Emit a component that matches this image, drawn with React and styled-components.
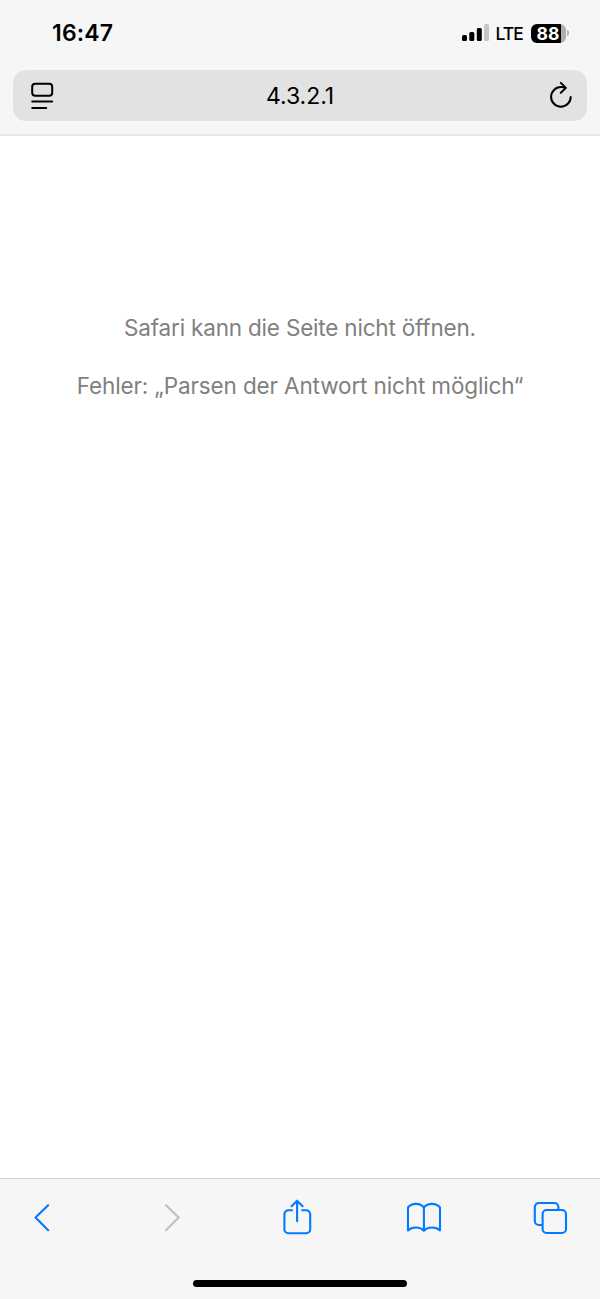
import React from "react";
import styled, { createGlobalStyle } from "styled-components";

const GlobalStyle = createGlobalStyle`
  *, *::before, *::after { box-sizing: border-box; }
  body { margin: 0; background: #fff; font-family: Inter, "Liberation Sans", sans-serif; }
`;

const Screen = styled.div`
  display: flex;
  flex-direction: column;
  width: 600px;
  height: 1299px;
  background: #fff;
  overflow: hidden;
`;

const Header = styled.header`
  height: 136px;
  flex: none;
  background: #f6f6f6;
  border-bottom: 2px solid #e8e8e8;
`;

const StatusBar = styled.div`
  display: flex;
  align-items: center;
  justify-content: space-between;
  height: 70px;
  padding: 0 31px 4px 52px;
  color: #000;
`;

const Time = styled.span`
  font-size: 23px;
  font-weight: 600;
  line-height: 28px;
  letter-spacing: 0.15px;
`;

const Indicators = styled.div`
  display: flex;
  align-items: center;
`;

const Network = styled.span`
  margin: 1px 8px 0 6px;
  font-size: 17.5px;
  font-weight: 500;
  line-height: 20px;
  letter-spacing: -0.9px;
`;

const Battery = styled.div`
  display: flex;
  align-items: center;
  justify-content: center;
  width: 35px;
  height: 19px;
  padding-right: 1px;
  border-radius: 6px;
  background: linear-gradient(to right, #000 0 30.5px, #afafaf 30.5px);
  color: #fff;
  font-size: 17.5px;
  font-weight: 700;
  line-height: 19px;
`;

const BatteryTip = styled.span`
  width: 2px;
  height: 6px;
  margin-left: 1px;
  border-radius: 0 2px 2px 0;
  background: #b5b5b5;
`;

const AddressBar = styled.div`
  display: flex;
  align-items: center;
  justify-content: space-between;
  height: 51px;
  margin: 0 13px;
  padding: 0 13px 0 15px;
  border-radius: 13px;
  background: #e2e2e2;
`;

const Address = styled.span`
  padding-right: 4px;
  font-size: 23px;
  line-height: 28px;
  letter-spacing: -0.05px;
  color: #000;
`;

const Page = styled.main`
  flex: 1;
  padding-top: 178px;
  text-align: center;
`;

const Message = styled.p`
  margin: 0 0 30px;
  font-size: 22.5px;
  line-height: 28px;
  letter-spacing: ${({ $tracking }) => $tracking}px;
  white-space: nowrap;
  color: #808080;
`;

const Footer = styled.footer`
  display: flex;
  flex-direction: column;
  align-items: center;
  justify-content: space-between;
  height: 121px;
  flex: none;
  padding: 17px 0 12px;
  border-top: 1px solid #d2d2d2;
  background: #f6f6f6;
`;

const Toolbar = styled.nav`
  display: flex;
  justify-content: space-between;
  width: 100%;
  padding: 0 28px 0 20px;
`;

const IconButton = styled.button`
  display: flex;
  padding: 0;
  border: 0;
  background: none;
  color: ${({ $muted }) => ($muted ? "#bfbfbf" : "#007aff")};
`;

const Icon = styled.svg`
  display: block;
  flex: none;
  fill: none;
  stroke: currentColor;
  stroke-width: ${({ $weight = 2 }) => $weight};
  stroke-linecap: round;
  stroke-linejoin: round;
`;

const HomeIndicator = styled.div`
  width: 214px;
  height: 7px;
  border-radius: 4px;
  background: #000;
`;

const SignalIcon = () => (
  <svg width="27" height="18" viewBox="0 0 27 18">
    <rect x="0" y="11" width="5" height="6" rx="1.5" />
    <rect x="7.3" y="8" width="5" height="9" rx="1.5" />
    <rect x="14.8" y="4" width="5" height="13" rx="1.5" />
    <rect x="22" y="0" width="5" height="17" rx="1.5" fill="#c6c6c6" />
  </svg>
);

const tools = [
  { label: "Zurück", drawing: <path d="M28.2 9.3 15.5 21.6l12.7 12.6" /> },
  { label: "Vorwärts", muted: true, drawing: <path d="M19 9.3 31.7 21.6 19 34.2" /> },
  {
    label: "Teilen",
    drawing: (
      <>
        <path d="M18.8 14.3h-4.4a4 4 0 0 0-4 4v15a4 4 0 0 0 4 4h17.8a4 4 0 0 0 4-4v-15a4 4 0 0 0-4-4h-4.8" strokeLinecap="butt" />
        <path d="M23.1 25.3V4.7M17.6 10.2l5.5-5.5 5.5 5.5" />
      </>
    ),
  },
  {
    label: "Lesezeichen",
    drawing: (
      <path d="M22.9 11.5C19 6.7 10.8 6.7 7 11.5v22.9c4-4 12-4 15.9.4 3.9-4.4 11.9-4.4 16.1-.4V11.5c-4-4.8-12.2-4.8-16.1 0zv23" />
    ),
  },
  {
    label: "Tabs",
    drawing: (
      <>
        <path d="M13.8 29h-3a4 4 0 0 1-4-4V11a4 4 0 0 1 4-4h15.6a4 4 0 0 1 4 4v2.8" />
        <rect x="14.6" y="14" width="23.4" height="23" rx="4" />
      </>
    ),
  },
];

export default function App() {
  return (
    <Screen>
      <GlobalStyle />
      <Header>
        <StatusBar>
          <Time>16:47</Time>
          <Indicators>
            <SignalIcon />
            <Network>LTE</Network>
            <Battery>88</Battery>
            <BatteryTip />
          </Indicators>
        </StatusBar>
        <AddressBar>
          <Icon width="28" height="30" viewBox="0 0 28 30">
            <rect x="4.2" y="2.7" width="20" height="12" rx="3" />
            <path d="M4.2 20.6h20M4.2 26.9h14" />
          </Icon>
          <Address>4.3.2.1</Address>
          <Icon width="26" height="30" viewBox="0 0 26 30">
            <path d="M22.7 15.9A9.8 9.8 0 1 1 12.9 6.1q2.7 0 5 .8M12.8 1.9l5.1 5-5.1 4.9" />
          </Icon>
        </AddressBar>
      </Header>
      <Page>
        <Message $tracking={-0.19}>Safari kann die Seite nicht öffnen.</Message>
        <Message $tracking={-0.13}>Fehler: „Parsen der Antwort nicht möglich“</Message>
      </Page>
      <Footer>
        <Toolbar>
          {tools.map(({ label, muted, drawing }) => (
            <IconButton key={label} aria-label={label} $muted={muted}>
              <Icon $weight={2.1} width="44" height="44" viewBox="0 0 44 44">{drawing}</Icon>
            </IconButton>
          ))}
        </Toolbar>
        <HomeIndicator />
      </Footer>
    </Screen>
  );
}
